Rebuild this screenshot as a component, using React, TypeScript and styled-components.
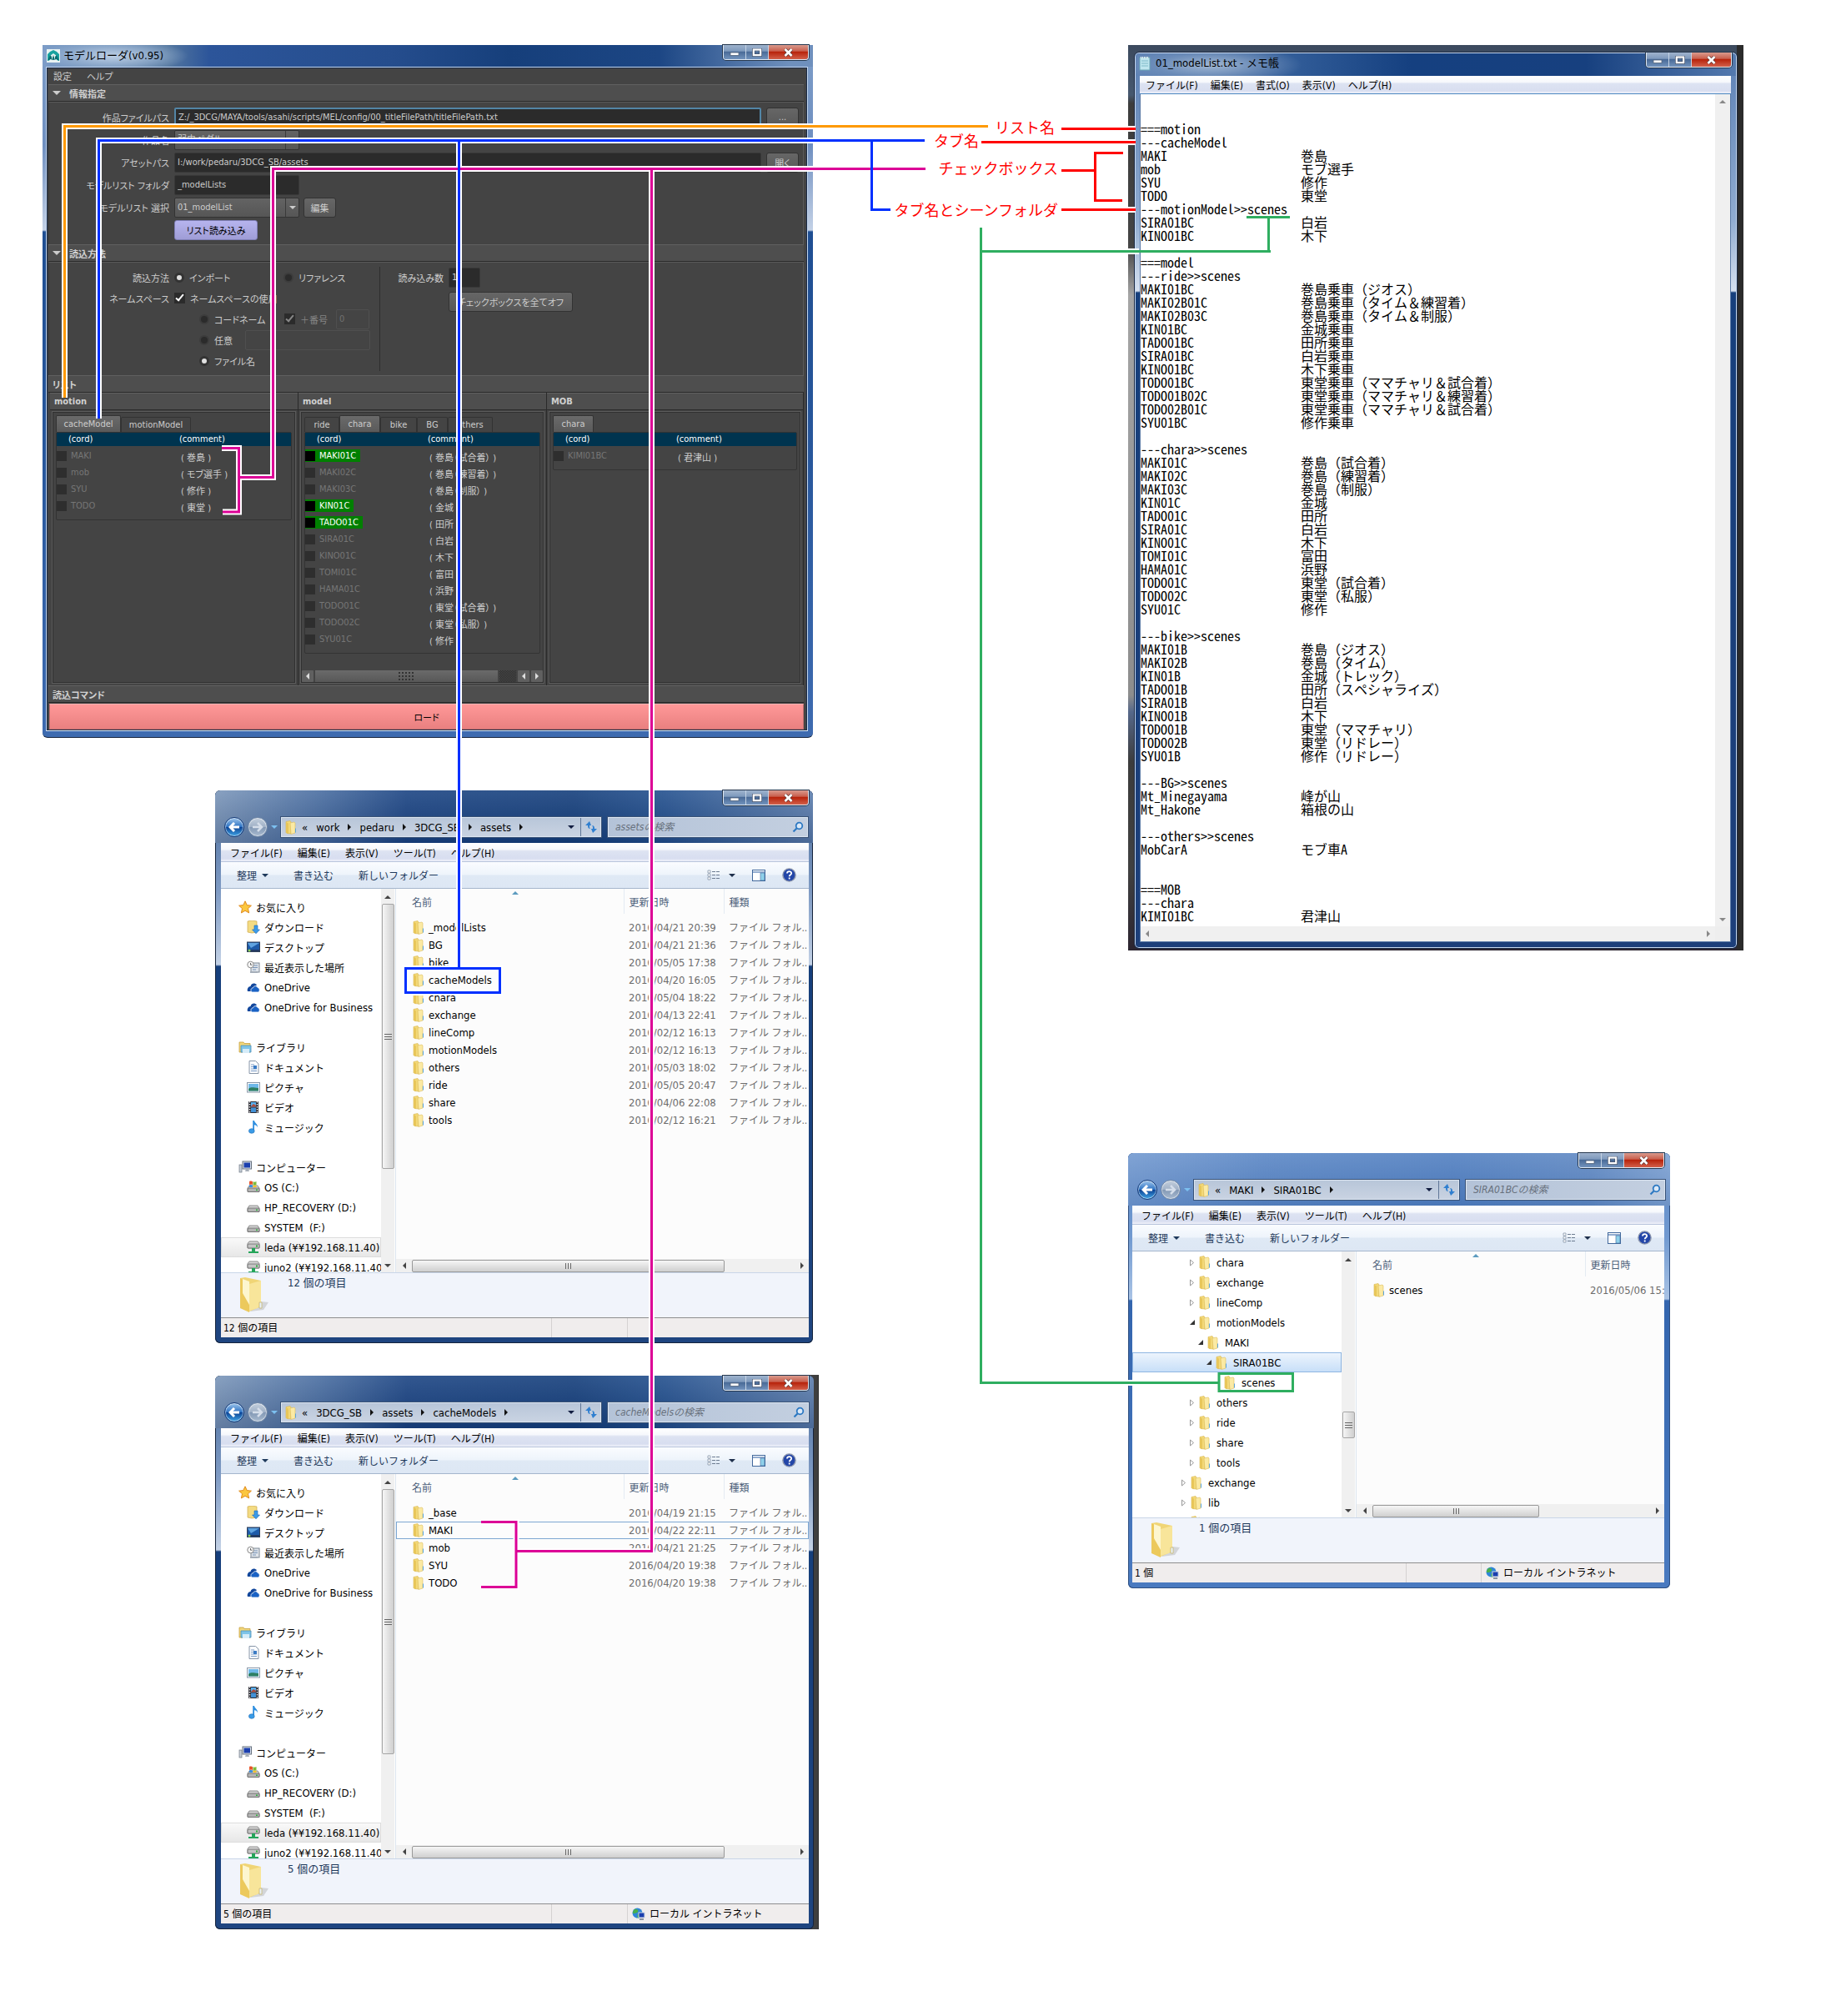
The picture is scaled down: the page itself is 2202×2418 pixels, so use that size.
import React from "react";
import styled, { createGlobalStyle, css } from "styled-components";

const UI = `"DejaVu Sans Condensed", "Noto Sans", "Noto Sans CJK JP", sans-serif`;
const MONO = `"Noto Sans Mono CJK JP", "Noto Sans CJK JP", monospace`;

const GlobalStyle = createGlobalStyle`
  *, *::before, *::after { box-sizing: border-box; }
  body { margin: 0; background: #fff; font-family: ${UI}; font-size: 12px; color: #000; }
  button, input, select, textarea { font: inherit; color: inherit; margin: 0; }
  button { padding: 0; border: 0; background: none; white-space: nowrap; }
`;

const Desktop = styled.main`
  position: relative;
  min-height: 100vh;
`;

type Box = { $x: number; $y: number; $w: number; $h: number };
const place = css<Box>`
  position: absolute;
  left: ${(p) => p.$x}px;
  top: ${(p) => p.$y}px;
  width: ${(p) => p.$w}px;
  height: ${(p) => p.$h}px;
`;

/* ---------- window chrome ---------- */

const Controls = styled.div`
  position: absolute;
  top: 0;
  right: ${(p: { $right?: number }) => p.$right ?? 4}px;
  display: flex;
  height: 18px;
  border: 1px solid #dfe8f3;
  border-top: 0;
  border-radius: 0 0 4px 4px;
  overflow: hidden;
  box-shadow: 0 0 0 1px #26384f;
`;

const ControlButton = styled.button<{ $close?: boolean }>`
  display: grid;
  place-items: center;
  width: ${(p) => (p.$close ? 47 : 27)}px;
  border-right: ${(p) => (p.$close ? "0" : "1px solid #c5d3e4")};
  background: ${(p) =>
    p.$close
      ? "linear-gradient(#d99a8d 0%, #c9604e 42%, #b8240c 50%, #d2604a 100%)"
      : "linear-gradient(#9fb3cd 0%, #7f9abd 42%, #4a6b98 50%, #7293bd 100%)"};
`;

function WindowControls({ right }: { right?: number }) {
  return (
    <Controls $right={right}>
      <ControlButton aria-label="最小化">
        <svg width="12" height="10"><rect x="1" y="5" width="10" height="3.5" fill="#fff" stroke="#53637a" strokeWidth=".8" /></svg>
      </ControlButton>
      <ControlButton aria-label="最大化">
        <svg width="12" height="10"><rect x="1.8" y="1.5" width="8.4" height="6.6" fill="none" stroke="#445068" strokeWidth="3.6" /><rect x="1.8" y="1.5" width="8.4" height="6.6" fill="none" stroke="#fff" strokeWidth="2.2" /></svg>
      </ControlButton>
      <ControlButton $close aria-label="閉じる">
        <svg width="13" height="10"><path d="M2.500 1l8 8M10.500 1l-8 8" stroke="#5b3a3a" strokeWidth="4" /><path d="M2.500 1l8 8M10.500 1l-8 8" stroke="#fff" strokeWidth="2.600" /></svg>
      </ControlButton>
    </Controls>
  );
}

const Triangle = styled.span<{ $dir: "up" | "down" | "left" | "right"; $size?: number; $color?: string }>`
  flex: none;
  width: 0;
  height: 0;
  border: ${(p) => p.$size ?? 4}px solid transparent;
  ${(p) => {
    const c = p.$color ?? "#444";
    if (p.$dir === "up") return `border-bottom-color:${c};border-top:0;`;
    if (p.$dir === "down") return `border-top-color:${c};border-bottom:0;`;
    if (p.$dir === "left") return `border-right-color:${c};border-left:0;`;
    return `border-left-color:${c};border-right:0;`;
  }}
`;

/* ---------- model loader ---------- */

const LoaderWindow = styled.section`
  ${place}
  display: flex;
  flex-direction: column;
  padding: 0 6px 7px 4px;
  border-radius: 0 0 6px 6px;
  border-bottom: 1px solid #16243c;
  background: linear-gradient(#7d9dc8 0, #6f8fc0 120px, #c3d1e6 222px, #1f4e92 224px, #28579c 500px, #3e6bb0 100%);
`;

const LoaderTitle = styled.header`
  display: flex;
  align-items: center;
  gap: 4px;
  height: 26px;
  margin: 0 -6px 0 -4px;
  padding-left: 5px;
  background:
    radial-gradient(ellipse 90px 20px at 85px 13px, rgba(205, 220, 238, 0.85), rgba(160, 185, 215, 0.6) 60%, transparent 100%),
    linear-gradient(90deg, #7d9dc8 0, #54779f 150px, #2c559a 200px, #254d8d 420px, #163f7b 560px, #1c4684 80%, #6f90bd 97%);
`;
const TitleText = styled.h1`
  margin: 0;
  font-size: 13px;
  font-weight: 400;
  line-height: 16px;
`;

const LoaderBody = styled.div`
  flex: 1;
  display: flex;
  flex-direction: column;
  padding: 0 4px 1px 2px;
  border: 1px solid #c3d6ee;
  border-bottom-color: #e0ebf8;
  outline: 1px solid #1b2c49;
  outline-offset: -2px;
  background: #444;
  color: #ccc;
  font-size: 11px;
  font-feature-settings: "palt";
`;

const DarkMenu = styled.nav`
  display: flex;
  gap: 18px;
  height: 20px;
  padding-left: 6px;
`;

const SectionTitle = styled.h2`
  display: flex;
  align-items: center;
  gap: 10px;
  margin: 0;
  height: 21px;
  padding-left: 5px;
  border-top: 1px solid #606060;
  border-bottom: 1px solid #2a2a2a;
  background: #4e4e4e;
  font-size: 11px;
  font-weight: 700;
  color: #d0d0d0;
`;

const SectionBox = styled.div`
  padding: 4px 0 4px;
  border: 1px solid #5a5a5a;
  border-left-color: #333;
  border-bottom: 0;
`;
const MethodBox = styled(SectionBox)`
  display: flex;
  padding: 5px 0;
`;
const MethodLeft = styled.div`
  width: 397px;
  border-right: 1px solid #2e2e2e;
`;
const MethodRight = styled.div`
  flex: 1;
  padding-left: 20px;
`;

const FormRow = styled.div<{ $h?: number; $indent?: number }>`
  display: flex;
  align-items: center;
  height: ${(p) => p.$h ?? 27}px;
  padding: 0 5px 0 ${(p) => p.$indent ?? 0}px;
`;
const FormLabel = styled.label<{ $w?: number }>`
  width: ${(p) => p.$w ?? 144}px;
  margin-right: 6px;
  text-align: right;
  white-space: nowrap;
`;
const DarkInput = styled.input<{ $w?: number; $focus?: boolean; $ghost?: boolean }>`
  ${(p) => (p.$w ? `width:${p.$w}px;` : "flex:1; min-width:0; margin-right:6px;")}
  height: 24px;
  padding: 0 3px;
  border: ${(p) => (p.$focus ? "2px solid #5285a6" : p.$ghost ? "1px solid #4f4f4f" : "1px solid #383838")};
  border-radius: 2px;
  background: ${(p) => (p.$ghost ? "#444" : "#2b2b2b")};
  color: ${(p) => (p.$ghost ? "#707070" : "#ccc")};
`;
const SelectWrap = styled.span`
  position: relative;
  width: 150px;
  height: 24px;
`;
const DarkSelect = styled.select`
  width: 100%;
  height: 24px;
  padding: 0 3px;
  appearance: none;
  border: 1px solid #333;
  border-radius: 2px;
  background: linear-gradient(90deg, transparent 132px, #3a3a3a 132px, #3a3a3a 133px, transparent 133px), linear-gradient(#636363, #565656);
`;
const SelectArrow = styled(Triangle)`
  position: absolute;
  right: 4px;
  top: 10px;
`;
const DarkButton = styled.button<{ $w: number }>`
  width: ${(p) => p.$w}px;
  height: 24px;
  border: 1px solid #333;
  border-radius: 3px;
  background: linear-gradient(#666, #585858);
`;
const EditButton = styled(DarkButton)`
  margin-left: 5px;
`;
const ListButton = styled(DarkButton)`
  margin-left: 150px;
  border: 1px solid #7f7fb5;
  background: linear-gradient(#b6b4ee, #9f9dd6);
  color: #000;
`;
const Choice = styled.label<{ $w?: number; $off?: boolean }>`
  display: flex;
  align-items: center;
  gap: 6px;
  width: ${(p) => (p.$w ? `${p.$w}px` : "auto")};
  white-space: nowrap;
  color: ${(p) => (p.$off ? "#858585" : "#ccc")};
`;
const Radio = styled.input`
  appearance: none;
  width: 12px;
  height: 12px;
  border-radius: 50%;
  border: 2px solid #3c3c3c;
  background: #2b2b2b;
  &:checked {
    border: 3px solid #333;
    background: #e0e0e0;
  }
`;
const Tick = styled.input<{ $off?: boolean }>`
  appearance: none;
  width: 13px;
  height: 13px;
  background: #2b2b2b;
  position: relative;
  &:checked::after {
    content: "";
    position: absolute;
    left: 4px;
    top: 0;
    width: 5px;
    height: 10px;
    border: solid ${(p) => (p.$off ? "#888" : "#fff")};
    border-width: 0 2px 2px 0;
    rotate: 40deg;
  }
`;

const Panels = styled.div`
  flex: 1;
  display: grid;
  grid-template-columns: 298px 298px 1fr;
  padding-left: 2px;
`;
const Panel = styled.section`
  display: flex;
  flex-direction: column;
  min-width: 0;
  border-right: 1px solid #2a2a2a;
`;
const PanelBox = styled.div`
  flex: 1;
  display: flex;
  flex-direction: column;
  justify-content: space-between;
  margin: 1px 2px 2px;
  border: 1px solid #5c5c5c;
  outline: 1px solid #303030;
  outline-offset: -2px;
  overflow: hidden;
`;
const PanelInner = styled.div`
  padding: 4px 4px 0;
`;
const Tabs = styled.div`
  display: flex;
  align-items: flex-end;
  height: 20px;
`;
const Tab = styled.button<{ $active?: boolean; $w: number }>`
  width: ${(p) => p.$w}px;
  height: ${(p) => (p.$active ? 20 : 18)}px;
  border: 1px solid #333;
  border-bottom: 0;
  border-radius: 2px 2px 0 0;
  background: ${(p) => (p.$active ? "linear-gradient(#6a6a6a, #5a5a5a)" : "#444")};
`;
const CordTable = styled.table`
  width: 100%;
  table-layout: fixed;
  border-collapse: separate;
  border-spacing: 0;
  border: 1px solid #333;
  border-radius: 2px;
  padding-bottom: 5px;
  th {
    height: 16px;
    padding: 0 0 0 14px;
    background: #00344f;
    color: #fff;
    font-weight: 400;
    text-align: left;
    line-height: 14px;
  }
  th:first-child { width: 147px; }
  th + th { padding-left: 0; }
  tbody::before { content: ""; display: table-row; height: 3px; }
  td {
    height: 20px;
    padding: 0;
    line-height: 14px;
    white-space: nowrap;
  }
  td + td { padding: 3px 0 0 2px; }
`;
const CordLabel = styled.label<{ $on?: boolean }>`
  display: inline-flex;
  align-items: center;
  gap: 5px;
  height: 15px;
  padding-right: 5px;
  background: ${(p) => (p.$on ? "#008000" : "transparent")};
  color: ${(p) => (p.$on ? "#fff" : "#767676")};
`;
const CordBox = styled.input<{ $on?: boolean }>`
  appearance: none;
  width: 12px;
  height: 12px;
  background: ${(p) => (p.$on ? "#000" : "#2e2e2e")};
`;
const DarkScroll = styled.div`
  display: flex;
  gap: 2px;
  height: 16px;
  padding: 1px;
`;
const DarkArrow = styled.button`
  display: grid;
  place-items: center;
  width: 14px;
  border-radius: 1px;
  background: #606060;
`;
const DarkThumb = styled.div`
  display: grid;
  place-items: center;
  width: 219px;
  background: linear-gradient(#6a6a6a, #585858);
`;
const DarkTrack = styled.div`
  flex: 1;
  background: repeating-conic-gradient(#2e2e2e 0 25%, #484848 0 50%) 0 0 / 2px 2px;
`;
const LoadButton = styled.button`
  height: 31px;
  margin: 1px 0 0 1px;
  border: 1px solid #c07070;
  border-top-color: #ffb0b0;
  background: linear-gradient(#ff9898, #e98080);
  color: #000;
`;

type Cord = [string, string, boolean?];

function CordList({ name, rows }: { name: string; rows: Cord[] }) {
  return (
    <CordTable>
      <thead>
        <tr><th>(cord)</th><th>(comment)</th></tr>
      </thead>
      <tbody>
        {rows.map(([code, comment, on]) => (
          <tr key={code}>
            <td>
              <CordLabel $on={on} htmlFor={`${name}-${code}`}>
                <CordBox $on={on} type="checkbox" id={`${name}-${code}`} defaultChecked={on} />
                {code}
              </CordLabel>
            </td>
            <td>( {comment} )</td>
          </tr>
        ))}
      </tbody>
    </CordTable>
  );
}

const motionRows: Cord[] = [["MAKI", "巻島"], ["mob", "モブ選手"], ["SYU", "修作"], ["TODO", "東堂"]];
const modelRows: Cord[] = [
  ["MAKI01C", "巻島（試合着）", true],
  ["MAKI02C", "巻島（練習着）"],
  ["MAKI03C", "巻島（制服）"],
  ["KIN01C", "金城", true],
  ["TADO01C", "田所", true],
  ["SIRA01C", "白岩"],
  ["KINO01C", "木下"],
  ["TOMI01C", "富田"],
  ["HAMA01C", "浜野"],
  ["TODO01C", "東堂（試合着）"],
  ["TODO02C", "東堂（私服）"],
  ["SYU01C", "修作"],
];

function ModelLoader() {
  return (
    <LoaderWindow $x={51} $y={54} $w={924} $h={831}>
      <LoaderTitle>
        <svg width="16" height="16" viewBox="0 0 16 16">
          <rect width="16" height="16" fill="#e9f3f3" />
          <path d="M1 14V6l3-3 4-2 4 2 3 3v8l-3-1V8L8 5 4 8v5z" fill="#17a2a0" />
          <path d="M1 14l3-7 2 2v4l2-6 2 6V9l2-2 3 7-3-2-4 1-4-1z" fill="#0b6e72" />
        </svg>
        <TitleText>モデルローダ(v0.95)</TitleText>
      </LoaderTitle>
      <WindowControls right={5} />
      <LoaderBody>
        <DarkMenu><button>設定</button><button>ヘルプ</button></DarkMenu>
        <SectionTitle><Triangle $dir="down" $size={5} $color="#ccc" />情報指定</SectionTitle>
        <SectionBox>
          <FormRow>
            <FormLabel htmlFor="title-path">作品ファイルパス</FormLabel>
            <DarkInput id="title-path" $focus defaultValue="Z:/_3DCG/MAYA/tools/asahi/scripts/MEL/config/00_titleFilePath/titleFilePath.txt" />
            <DarkButton $w={39}>...</DarkButton>
          </FormRow>
          <FormRow>
            <FormLabel htmlFor="title-name">作品名</FormLabel>
            <SelectWrap>
              <DarkSelect id="title-name"><option>弱虫ペダル</option></DarkSelect>
              <SelectArrow $dir="down" $color="#ccc" />
            </SelectWrap>
          </FormRow>
          <FormRow>
            <FormLabel htmlFor="asset-path">アセットパス</FormLabel>
            <DarkInput id="asset-path" defaultValue="I:/work/pedaru/3DCG_SB/assets" />
            <DarkButton $w={39}>開く</DarkButton>
          </FormRow>
          <FormRow>
            <FormLabel htmlFor="list-folder">モデルリスト フォルダ</FormLabel>
            <DarkInput id="list-folder" $w={150} defaultValue="_modelLists" />
          </FormRow>
          <FormRow>
            <FormLabel htmlFor="list-select">モデルリスト 選択</FormLabel>
            <SelectWrap>
              <DarkSelect id="list-select"><option>01_modelList</option></DarkSelect>
              <SelectArrow $dir="down" $color="#ccc" />
            </SelectWrap>
            <EditButton $w={39}>編集</EditButton>
          </FormRow>
          <FormRow><ListButton $w={100}>リスト読み込み</ListButton></FormRow>
        </SectionBox>
        <SectionTitle><Triangle $dir="down" $size={5} $color="#ccc" />読込方法</SectionTitle>
        <MethodBox>
          <MethodLeft>
            <FormRow $h={25}>
              <FormLabel as="span">読込方法</FormLabel>
              <Choice $w={131}><Radio type="radio" name="method" defaultChecked />インポート</Choice>
              <Choice><Radio type="radio" name="method" />リファレンス</Choice>
            </FormRow>
            <FormRow $h={25}>
              <FormLabel as="span">ネームスペース</FormLabel>
              <Choice><Tick type="checkbox" defaultChecked />ネームスペースの使用</Choice>
            </FormRow>
            <FormRow $h={25} $indent={180}>
              <Choice $w={102}><Radio type="radio" name="space" />コードネーム</Choice>
              <Choice $off $w={62}><Tick $off type="checkbox" defaultChecked disabled />＋番号</Choice>
              <DarkInput $ghost $w={40} aria-label="番号" defaultValue="0" disabled />
            </FormRow>
            <FormRow $h={25} $indent={180}>
              <Choice $w={55}><Radio type="radio" name="space" />任意</Choice>
              <DarkInput $ghost $w={150} aria-label="任意" disabled />
            </FormRow>
            <FormRow $h={25} $indent={180}>
              <Choice><Radio type="radio" name="space" defaultChecked />ファイル名</Choice>
            </FormRow>
          </MethodLeft>
          <MethodRight>
            <FormRow $h={25}>
              <FormLabel $w={56} htmlFor="count">読み込み数</FormLabel>
              <DarkInput id="count" $w={38} defaultValue="1" />
            </FormRow>
            <FormRow $h={33} $indent={62}><DarkButton $w={149}>チェックボックスを全てオフ</DarkButton></FormRow>
          </MethodRight>
        </MethodBox>
        <SectionTitle>リスト</SectionTitle>
        <Panels>
          <Panel>
            <SectionTitle>motion</SectionTitle>
            <PanelBox>
              <PanelInner>
                <Tabs><Tab $active $w={78}>cacheModel</Tab><Tab $w={84}>motionModel</Tab></Tabs>
                <CordList name="motion" rows={motionRows} />
              </PanelInner>
            </PanelBox>
          </Panel>
          <Panel>
            <SectionTitle>model</SectionTitle>
            <PanelBox>
              <PanelInner>
                <Tabs>
                  <Tab $w={42}>ride</Tab><Tab $active $w={49}>chara</Tab><Tab $w={44}>bike</Tab>
                  <Tab $w={37}>BG</Tab><Tab $w={54}>others</Tab>
                </Tabs>
                <CordList name="model" rows={modelRows} />
              </PanelInner>
              <DarkScroll>
                <DarkArrow aria-label="左"><Triangle $dir="left" $color="#ddd" /></DarkArrow>
                <DarkThumb>
                  <svg width="20" height="12">
                    {[0, 1, 2, 3, 4].map((c) => [0, 1, 2].map((r) => <rect key={`${c}${r}`} x={c * 4} y={r * 4 + 1} width="2" height="2" fill="#333" />))}
                  </svg>
                </DarkThumb>
                <DarkTrack />
                <DarkArrow aria-label="左へ"><Triangle $dir="left" $color="#ddd" /></DarkArrow>
                <DarkArrow aria-label="右へ"><Triangle $dir="right" $color="#ddd" /></DarkArrow>
              </DarkScroll>
            </PanelBox>
          </Panel>
          <Panel>
            <SectionTitle>MOB</SectionTitle>
            <PanelBox>
              <PanelInner>
                <Tabs><Tab $active $w={49}>chara</Tab></Tabs>
                <CordList name="mob" rows={[["KIMI01BC", "君津山"]]} />
              </PanelInner>
            </PanelBox>
          </Panel>
        </Panels>
        <SectionTitle>読込コマンド</SectionTitle>
        <LoadButton>ロード</LoadButton>
      </LoaderBody>
    </LoaderWindow>
  );
}

/* ---------- notepad ---------- */

const Backdrop = styled.div`
  ${place}
  background:
    linear-gradient(90deg, transparent 730px, #2b2b2b 730px),
    linear-gradient(#3c4a5e 0, #46586f 60px, #3d3d3d 70px, #444 240px, #a5a5a5 300px, #8d8d8d 780px, #56688a 800px, #3c3c3c 860px, #404040 990px, #2c2530 100%);
`;
const DarkStrip = styled.div`
  ${place}
  background: #3f3f3f;
  border-right: 1px solid #2c2c2c;
`;
const NotepadWindow = styled.section`
  ${place}
  display: flex;
  flex-direction: column;
  padding: 0 7px 7px 6px;
  border: 1px solid #1c2a44;
  border-radius: 6px;
  background: linear-gradient(#5c80b4 0, #8fabd0 200px, #d5e0ef 286px, #163f7c 288px, #1d3f7a 100%);
  box-shadow: inset 0 0 0 1px #c5d7ee;
`;
const NotepadTitle = styled.header`
  display: flex;
  align-items: center;
  gap: 6px;
  height: 27px;
  margin: 1px -6px 0 -5px;
  padding: 0 0 3px 4px;
  border-radius: 6px 6px 0 0;
  background:
    radial-gradient(ellipse 110px 24px at 90px 14px, rgba(170, 190, 215, 0.9), rgba(120, 150, 190, 0.6) 60%, transparent 100%),
    linear-gradient(90deg, #5f83b6, #2f5a96 200px, #154080 330px, #17407f 75%, #5379ae 100%);
`;
const MenuBar = styled.nav`
  display: flex;
  align-items: center;
  gap: ${(p: { $gap?: number }) => p.$gap ?? 18}px;
  height: 23px;
  padding-left: 11px;
  background: linear-gradient(#fff 0, #f6f8fc 35%, #dde3f2 45%, #d8def0 85%, #f0f2fa 100%);
  border-bottom: 1px solid #b8c4dc;
`;
const NotepadMenu = styled(MenuBar)`
  height: 22px;
  padding-left: 7px;
  border-bottom-color: #4a86c0;
`;
const NotepadBody = styled.div`
  flex: 1;
  display: grid;
  grid-template-columns: 1fr 18px;
  grid-template-rows: 1fr 18px;
  min-height: 0;
  border: 1px solid #5b7aa6;
  border-top: 0;
  background: #fff;
`;
const Editor = styled.textarea`
  display: block;
  width: 100%;
  height: 100%;
  padding: 1px 0 0;
  border: 0;
  outline: 0;
  resize: none;
  overflow: hidden;
  background: #fff;
  color: #000;
  font-family: ${MONO};
  font-size: 16px;
  line-height: 16px;
  tab-size: 8;
  white-space: pre;
`;
const ScrollV = styled.div`
  display: flex;
  flex-direction: column;
  align-items: center;
  justify-content: space-between;
  padding: 7px 0 6px;
  background: #f0f0f0;
`;
const ScrollH = styled.div`
  display: flex;
  align-items: center;
  justify-content: space-between;
  padding: 0 6px;
  background: #f0f0f0;
`;
const Corner = styled.div`
  background: #eee;
`;

const notepadText = [
  "", "",
  "===motion", "---cacheModel",
  "MAKI\t\t\t巻島", "mob\t\t\tモブ選手", "SYU\t\t\t修作", "TODO\t\t\t東堂",
  "---motionModel>>scenes",
  "SIRA01BC\t\t白岩", "KINO01BC\t\t木下",
  "",
  "===model", "---ride>>scenes",
  "MAKI01BC\t\t巻島乗車（ジオス）",
  "MAKI02B01C\t\t巻島乗車（タイム＆練習着）",
  "MAKI02B03C\t\t巻島乗車（タイム＆制服）",
  "KIN01BC\t\t\t金城乗車",
  "TADO01BC\t\t田所乗車",
  "SIRA01BC\t\t白岩乗車",
  "KINO01BC\t\t木下乗車",
  "TODO01BC\t\t東堂乗車（ママチャリ＆試合着）",
  "TODO01B02C\t\t東堂乗車（ママチャリ＆練習着）",
  "TODO02B01C\t\t東堂乗車（ママチャリ＆試合着）",
  "SYU01BC\t\t\t修作乗車",
  "",
  "---chara>>scenes",
  "MAKI01C\t\t\t巻島（試合着）",
  "MAKI02C\t\t\t巻島（練習着）",
  "MAKI03C\t\t\t巻島（制服）",
  "KIN01C\t\t\t金城",
  "TADO01C\t\t\t田所",
  "SIRA01C\t\t\t白岩",
  "KINO01C\t\t\t木下",
  "TOMI01C\t\t\t富田",
  "HAMA01C\t\t\t浜野",
  "TODO01C\t\t\t東堂（試合着）",
  "TODO02C\t\t\t東堂（私服）",
  "SYU01C\t\t\t修作",
  "",
  "---bike>>scenes",
  "MAKI01B\t\t\t巻島（ジオス）",
  "MAKI02B\t\t\t巻島（タイム）",
  "KIN01B\t\t\t金城（トレック）",
  "TADO01B\t\t\t田所（スペシャライズ）",
  "SIRA01B\t\t\t白岩",
  "KINO01B\t\t\t木下",
  "TODO01B\t\t\t東堂（ママチャリ）",
  "TODO02B\t\t\t東堂（リドレー）",
  "SYU01B\t\t\t修作（リドレー）",
  "",
  "---BG>>scenes",
  "Mt_Minegayama\t\t峰が山",
  "Mt_Hakone\t\t箱根の山",
  "",
  "---others>>scenes",
  "MobCarA\t\t\tモブ車A",
  "", "",
  "===MOB", "---chara",
  "KIMI01BC\t\t君津山",
].join("\n");

function Notepad() {
  return (
    <>
      <Backdrop $x={1353} $y={54} $w={738} $h={1086} />
      <NotepadWindow $x={1360} $y={62} $w={724} $h={1076}>
        <NotepadTitle>
          <svg width="14" height="18" viewBox="0 0 14 18">
            <rect x="1" y="2" width="12" height="15" fill="#bfe6ef" stroke="#6aa5b5" />
            <path d="M3 6h8M3 9h8M3 12h8" stroke="#7fb9c8" />
            <path d="M2 2h10" stroke="#fff" strokeWidth="2" strokeDasharray="1 1" />
          </svg>
          <TitleText>01_modelList.txt - メモ帳</TitleText>
        </NotepadTitle>
        <WindowControls right={6} />
        <NotepadMenu $gap={15}>
          {["ファイル(F)", "編集(E)", "書式(O)", "表示(V)", "ヘルプ(H)"].map((t) => <button key={t}>{t}</button>)}
        </NotepadMenu>
        <NotepadBody>
          <Editor aria-label="01_modelList.txt" defaultValue={notepadText} spellCheck={false} />
          <ScrollV><Triangle $dir="up" $color="#888" /><Triangle $dir="down" $color="#888" /></ScrollV>
          <ScrollH><Triangle $dir="left" $color="#888" /><Triangle $dir="right" $color="#888" /></ScrollH>
          <Corner />
        </NotepadBody>
      </NotepadWindow>
    </>
  );
}

/* ---------- icons ---------- */

function Folder({ size = 14 }: { size?: number }) {
  return (
    <svg width={size} height={Math.round(size * 1.2)} viewBox="0 0 14 17">
      <path d="M1 1.500l5-1 1 1.500V16l-5-.5-1-1z" fill="#f3d978" stroke="#d9b64e" strokeWidth=".6" />
      <path d="M6 3l5-1 1 1v12l-5 1.500z" fill="#fbeaa4" stroke="#dcbc5c" strokeWidth=".6" />
      <path d="M1 2l3 1.500V16l-3-1.500z" fill="#e8c65a" />
      <path d="M12 9.500h1v5h-1z" fill="#5ba4dd" />
    </svg>
  );
}

function BigFolder() {
  return (
    <svg width="38" height="44" viewBox="0 0 38 44">
      <path d="M27 30l9 1-6 9-16 2z" fill="#9a9a9a" opacity=".35" />
      <path d="M2 2l6-1 19 4v31l-5 2-9 4z" fill="#f0d576" />
      <path d="M13 9l14-4v28l-4 5-10 3z" fill="#f8e59a" />
      <path d="M2 2l11 6v35L2 38z" fill="#ecc95c" />
      <path d="M5 3l8 3v28L5 20z" fill="#fdf6cf" />
      <path d="M25 31h3v7h-3z" fill="#e8f2fa" stroke="#c9b672" strokeWidth=".8" />
    </svg>
  );
}

function TreeIcon({ kind }: { kind: string }) {
  const drive = (
    <>
      <path d="M1 9l2-3h10l2 3v4.500H1z" fill="#d5d5d5" stroke="#777" strokeWidth=".8" />
      <rect x="1" y="9" width="14" height="4.500" rx="1" fill="#b4b4b4" stroke="#666" strokeWidth=".8" />
      <rect x="11" y="10.500" width="2" height="1.500" fill="#2fae3c" />
    </>
  );
  const shapes: Record<string, React.ReactNode> = {
    star: <path d="M8 .8l2.200 4.800 5.200.6-3.900 3.500 1.100 5.200L8 12.300l-4.600 2.600 1.100-5.200L.6 6.200l5.200-.6z" fill="#fbc740" stroke="#e08a1c" strokeWidth="1" />,
    download: <><path d="M1 1l5-1 6 1v13l-6 1-5-1z" fill="#f3db83" stroke="#cfa94a" strokeWidth=".7" /><path d="M9 6h4v5h2.500L11 15.800 6.500 11H9z" fill="#3c9be8" stroke="#1565b8" strokeWidth=".6" /></>,
    desktop: <><rect x=".5" y="2" width="15" height="11.500" fill="#1d5aa8" stroke="#31415a" /><path d="M1 3h14L5 9z" fill="#5fa3e0" /><rect x="1" y="11" width="14" height="2" fill="#223a66" /><circle cx="3" cy="12" r="1.500" fill="#8bd15a" /></>,
    recent: <><rect x="5" y="3" width="10" height="11" fill="#dfe4ea" stroke="#7c8794" /><path d="M7 6h6M7 8.500h6M7 11h4" stroke="#7693b8" /><circle cx="4.500" cy="5" r="3.800" fill="#f6f6f6" stroke="#8b8b8b" /><path d="M4.500 3v2.200h2" stroke="#444" fill="none" strokeWidth=".8" /><rect x="4" y="13" width="9" height="2" fill="#a4adb8" /></>,
    onedrive: <><path d="M1 13C0 10 2 7 4.500 7 5 3.500 9 2 12 5L6 13z" fill="#12479c" /><path d="M6 14c-2-2-1-5 1.500-5.200C8.500 6 12 6 13 8.500c2.500.5 3 4 1 5.500z" fill="#1a62c4" stroke="#fff" strokeWidth=".8" /></>,
    library: <><path d="M1 2h5l1 1.500h7V14H1z" fill="#f2d77b" stroke="#c59f3f" strokeWidth=".8" /><path d="M3 6h12v8H3z" fill="#7ec4e8" stroke="#4b8fb8" strokeWidth=".8" /><path d="M5 10h8v5H5z" fill="#d6ecf8" /></>,
    doc: <><path d="M3 .5h7.500L14 4v11.500H3z" fill="#fbfcfe" stroke="#8896a8" /><path d="M5 5h4M5 7.500h7M5 10h7M5 12.500h7" stroke="#7b9cc6" /><rect x="8" y="6" width="4" height="4" fill="#3b7bc4" /></>,
    pic: <><rect x=".5" y="2.500" width="15" height="11.500" fill="#fff" stroke="#8896a8" /><rect x="2" y="4" width="12" height="8.500" fill="#6fb8e8" /><path d="M2 12.500V10c4-3 6-1 12-1v3.500z" fill="#2e7f63" /></>,
    video: <><rect x="2" y="1" width="12" height="14" fill="#2b2b33" /><path d="M3.500 1v14M12.500 1v14" stroke="#fff" strokeWidth="1.400" strokeDasharray="1.500 1.500" /><rect x="5" y="2" width="6" height="5.500" fill="#5ab0ee" /><rect x="5" y="8.500" width="6" height="5.500" fill="#4291d6" /><path d="M5 7l3-3 3 2v1.500H5z" fill="#b04a3a" /></>,
    music: <><path d="M7.200 0h1.800c.3 3 4.500 4 4 8.500-.3-2-2-3-4-3.200V12H7.200z" fill="#2f8fe0" /><ellipse cx="5.800" cy="12.500" rx="3.400" ry="2.800" fill="#3a9be6" stroke="#1f6bb6" strokeWidth=".6" /></>,
    computer: <><rect x="5" y="1" width="10.500" height="9" fill="#dfe4ea" stroke="#66717f" /><rect x="6.500" y="2.500" width="7.500" height="6" fill="#1b3fae" /><path d="M8 13h5l-1-3H9z" fill="#a6aeb8" /><rect x="1" y="5" width="3" height="9" fill="#c9d0d8" stroke="#6b7683" strokeWidth=".7" /></>,
    os: <>{drive}<path d="M3 1c2-1 3 0 4 .3V5C6 4.500 5 4 3 5z" fill="#e8552a" /><path d="M7.500 1.300c1.500.5 2.500.5 4-.3v4c-1.500.7-2.500.7-4 .2z" fill="#7dbb3c" /><path d="M3 5.500c2-1 3-.3 4 0V8H3z" fill="#3c8ee0" /><path d="M7.500 5.700c1.500.5 2.500.3 4-.2V8h-4z" fill="#f5c32c" /></>,
    drive,
    net: <><path d="M1 3.500L3 1h10l2 2.500V9H1z" fill="#d8d8d8" stroke="#777" strokeWidth=".8" /><rect x="1" y="4" width="14" height="5" rx="1" fill="#c4c4c4" stroke="#666" strokeWidth=".8" /><rect x="11" y="5.500" width="2" height="2" fill="#2fae3c" /><path d="M8 9v5" stroke="#25a55a" strokeWidth="4" /><path d="M2 14h12" stroke="#25a55a" strokeWidth="2" /></>,
  };
  return <svg width="16" height="16" viewBox="0 0 16 16">{shapes[kind]}</svg>;
}

/* ---------- explorer ---------- */

const ExplorerFrame = styled.section<Box & { $l: number; $r: number; $light?: boolean }>`
  ${place}
  display: flex;
  flex-direction: column;
  padding: 0 ${(p) => p.$r}px 7px ${(p) => p.$l}px;
  border-radius: 6px;
  background: ${(p) =>
    p.$light
      ? "linear-gradient(#5d88c6 0, #7099d0 100px, #a9c3e5 175px, #3365ae 177px, #4a7ac0 100%)"
      : "linear-gradient(#4a6c9c 0, #7f9bc4 120px, #c4d2e6 209px, #163f7c 211px, #1f4580 100%)"};
  box-shadow: inset 0 0 0 1px ${(p) => (p.$light ? "#2f4f80" : "#16243c")};
`;
const ExplorerTop = styled.header<{ $l: number; $r: number; $light?: boolean }>`
  display: flex;
  align-items: flex-end;
  gap: 8px;
  height: 63px;
  margin: 0 -${(p) => p.$r}px 0 -${(p) => p.$l}px;
  padding: 0 6px 7px 11px;
  border-radius: 6px 6px 0 0;
  background: ${(p) =>
    p.$light
      ? "linear-gradient(rgba(255,255,255,.12), rgba(20,50,100,.1)), linear-gradient(90deg, #6f97cf 0, #5784c4 25%, #4e7dc0 60%, #5c86c2 85%, #7ba0d2 100%)"
      : "linear-gradient(rgba(255,255,255,.1), rgba(0,20,60,.2)), linear-gradient(90deg, #7c97ba 0, #4b6fa2 17%, #1b4483 32%, #153f7c 60%, #23508e 75%, #5e7fae 100%)"};
`;
const NavButtons = styled.div`
  display: flex;
  align-items: center;
  gap: 4px;
  height: 24px;
`;
const Orb = styled.button<{ $back?: boolean }>`
  display: grid;
  place-items: center;
  width: 24px;
  height: 24px;
  border: 1px solid ${(p) => (p.$back ? "#143a78" : "#6f87a6")};
  border-radius: 50%;
  background: ${(p) =>
    p.$back
      ? "linear-gradient(#9fc6ec 0, #2f74c4 48%, #0d4596 52%, #3fa4e6 100%)"
      : "linear-gradient(#c3cfdd 0, #9fb0c6 50%, #8399b5 52%, #a9bbd0 100%)"};
  box-shadow: inset 0 0 0 1px rgba(255, 255, 255, 0.5);
`;
const AddressBar = styled.div<{ $w: number }>`
  display: flex;
  align-items: center;
  width: ${(p) => p.$w}px;
  height: 24px;
  padding-left: 4px;
  margin-left: -4px;
  border: 1px solid #dbe5f1;
  outline: 1px solid #3a5377;
  background: linear-gradient(#b8c6d9, #c9d3e2);
  font-size: 13px;
`;
const Crumbs = styled.div`
  flex: 1;
  display: flex;
  align-items: center;
  gap: 10px;
  padding-left: 6px;
`;
const RefreshButton = styled.button`
  display: grid;
  place-items: center;
  width: 24px;
  height: 22px;
  margin-left: 7px;
  border-left: 1px solid #5f7697;
`;
const SearchBox = styled.label`
  flex: 1;
  display: flex;
  align-items: center;
  height: 24px;
  padding: 0 4px 0 8px;
  border: 1px solid #dbe5f1;
  outline: 1px solid #3a5377;
  background: linear-gradient(90deg, #b4c3d8, #c3cfe0);
`;
const SearchInput = styled.input`
  flex: 1;
  min-width: 0;
  padding: 0;
  border: 0;
  outline: 0;
  background: none;
  font-size: 12px;
  &::placeholder { color: #67707c; font-style: italic; opacity: 1; }
`;
const ToolBar = styled.div`
  display: flex;
  align-items: center;
  gap: 30px;
  height: 32px;
  padding: 0 15px 0 19px;
  background: linear-gradient(#fafcff 0, #eef4fb 48%, #dfe9f5 52%, #dde7f4 100%);
  border-bottom: 1px solid #a5b6cd;
  color: #1e395b;
`;
const ToolButton = styled.button<{ $gap?: number }>`
  display: flex;
  align-items: center;
  gap: ${(p) => p.$gap ?? 6}px;
`;
const ToolIcons = styled.div`
  display: flex;
  align-items: center;
  gap: 20px;
  margin-left: auto;
`;
const Panes = styled.div`
  flex: 1;
  display: flex;
  min-height: 0;
  background: #fcfcfc;
`;
const Tree = styled.ul<{ $w: number; $top: number }>`
  width: ${(p) => p.$w}px;
  margin: 0;
  padding: ${(p) => p.$top}px 0 0;
  list-style: none;
  overflow: hidden;
  background: #fff;
`;
const TreeRow = styled.li<{ $pad: number; $mark?: "hover" | "selected"; $gap?: number; $latin?: boolean }>`
  display: flex;
  align-items: center;
  gap: ${(p) => p.$gap ?? 5}px;
  height: 24px;
  padding-left: ${(p) => p.$pad}px;
  font-size: ${(p) => (p.$latin ? 13 : 12)}px;
  white-space: pre;
  svg { flex: none; }
  ${(p) => p.$mark === "hover" && "background: linear-gradient(#fafafa, #e6e6e6); box-shadow: inset 0 0 0 1px #dcdcdc;"}
  ${(p) => p.$mark === "selected" && "background: linear-gradient(#eef5fd, #c6def8); box-shadow: inset 0 0 0 1px #8fb6e2;"}
`;
const Expander = styled.span`
  display: grid;
  place-items: center;
  width: 10px;
  margin-right: -4px;
`;
const SideScroll = styled.div`
  display: flex;
  flex-direction: column;
  align-items: center;
  width: 16px;
  padding: 8px 0 6px;
  background: #f0f0f0;
`;
const SideThumb = styled.div<{ $top: number; $h: number }>`
  display: grid;
  place-items: center;
  width: 15px;
  height: ${(p) => p.$h}px;
  margin: ${(p) => p.$top}px 0 auto;
  border: 1px solid #a5a5a5;
  border-radius: 2px;
  background: linear-gradient(90deg, #f6f6f6, #e2e2e2 50%, #cfcfcf);
`;
const ListPane = styled.div`
  flex: 1;
  display: flex;
  flex-direction: column;
  justify-content: space-between;
  min-width: 0;
  margin-left: 1px;
  border-left: 1px solid #dde6f0;
`;
const FileTable = styled.table`
  position: relative;
  width: 100%;
  table-layout: fixed;
  border-collapse: collapse;
  th {
    height: 30px;
    padding: 0 0 0 6px;
    border-left: 1px solid #e4ebf3;
    color: #4c607a;
    font-weight: 400;
    text-align: left;
    white-space: nowrap;
  }
  th:first-child { padding-left: 19px; border-left: 0; }
  td {
    height: 21px;
    padding: 0 0 0 6px;
    color: #6d6d6d;
    white-space: nowrap;
    line-height: 16px;
  }
  td:first-child { padding-left: 20px; color: #000; font-size: 13px; }
  td:nth-child(2) { font-size: 13px; }
  tbody::before { content: ""; display: table-row; height: 6px; }
`;
const SortMark = styled.span`
  position: absolute;
  left: ${(p: { $x: number }) => p.$x}px;
  top: 3px;
  display: flex;
`;
const FileRow = styled.tr<{ $focus?: boolean }>`
  ${(p) => p.$focus && "outline: 1px solid #7da7d2; outline-offset: -1px;"}
`;
const FileName = styled.span`
  display: flex;
  align-items: center;
  gap: 5px;
`;
const BottomScroll = styled.div`
  display: flex;
  align-items: center;
  height: 16px;
  padding: 0 6px 0 8px;
  background: #f0f0f0;
`;
const BottomThumb = styled.div<{ $w: number }>`
  display: grid;
  place-items: center;
  width: ${(p) => p.$w}px;
  height: 15px;
  margin: 0 auto 0 7px;
  border: 1px solid #999;
  border-radius: 2px;
  background: linear-gradient(#f6f6f6, #e2e2e2 50%, #cfcfcf);
`;
const Details = styled.div`
  display: flex;
  gap: 21px;
  height: 54px;
  padding: 4px 0 0 21px;
  border-top: 1px solid #c9d6e8;
  background: #f1f4fb;
  color: #1e395b;
  font-size: 13px;
  line-height: 16px;
`;
const StatusBar = styled.footer`
  display: flex;
  height: 24px;
  border-top: 1px solid #8e8e8e;
  background: #f0eded;
  line-height: 22px;
`;
const StatusCell = styled.span<{ $w?: number }>`
  display: flex;
  align-items: center;
  gap: 5px;
  ${(p) => (p.$w ? `width:${p.$w}px;` : "flex:1;")}
  padding-left: 3px;
  white-space: nowrap;
  & + & { border-left: 1px solid #d5d2d2; padding-left: 5px; }
`;

type Node = { label?: string; icon?: string; pad: number; tri?: "open" | "closed" | "none"; mark?: "hover" | "selected" };
type File = [string, string, string?];
type ExplorerProps = {
  box: [number, number, number, number];
  inset: [number, number];
  light?: boolean;
  address: string[];
  addressWidth: number;
  search: string;
  tree: Node[];
  treeWidth: number;
  treeTop: number;
  thumb: [number, number];
  columns: number[];
  headers: string[];
  sortX: number;
  files: File[];
  focus?: string;
  scrollThumb: number;
  count: string;
  status: string;
  statusWidths: [number, number];
  intranet?: boolean;
};

const isLatin = (text = "") => /^[\x20-\xff]+$/.test(text);

const Grip = ({ vertical }: { vertical?: boolean }) => (
  <svg width="9" height="9">
    <path d={vertical ? "M0 1.500h9M0 4.500h9M0 7.500h9" : "M1.500 1v7M4.500 1v7M7.500 1v7"} stroke="#666" />
  </svg>
);

function Explorer(p: ExplorerProps) {
  const [x, y, w, h] = p.box;
  const [l, r] = p.inset;
  return (
    <ExplorerFrame $x={x} $y={y} $w={w} $h={h} $l={l} $r={r} $light={p.light}>
      <ExplorerTop $l={l} $r={r} $light={p.light}>
        <NavButtons>
          <Orb $back aria-label="戻る">
            <svg width="14" height="12"><path d="M7 1L2 6l5 5M2.500 6H13" fill="none" stroke="#fff" strokeWidth="3" /></svg>
          </Orb>
          <Orb aria-label="進む">
            <svg width="14" height="12"><path d="M7 1l5 5-5 5M11.500 6H1" fill="none" stroke="#d5deea" strokeWidth="2.500" /></svg>
          </Orb>
          <Triangle $dir="down" $size={4} $color="#7cc0f0" />
        </NavButtons>
        <AddressBar $w={p.addressWidth}>
          <Folder />
          <Crumbs>
            <span>«</span>
            {p.address.map((a) => (
              <React.Fragment key={a}>
                <button>{a}</button>
                <Triangle $dir="right" $size={4} $color="#111" />
              </React.Fragment>
            ))}
          </Crumbs>
          <Triangle $dir="down" $size={4} $color="#111c40" />
          <RefreshButton aria-label="更新">
            <svg width="16" height="14" viewBox="0 0 16 14">
              <path d="M6 0L1 5h3c0 3 1 4 3 4-1-1-1-2-1-4h2z" fill="#2f7fd0" />
              <path d="M10 14l5-5h-3c0-3-1-4-3-4 1 1 1 2 1 4H8z" fill="#2f7fd0" />
            </svg>
          </RefreshButton>
        </AddressBar>
        <SearchBox>
          <SearchInput placeholder={p.search} aria-label={p.search} />
          <svg width="14" height="14"><circle cx="8.500" cy="5.500" r="3.800" fill="#dbe9f8" stroke="#2c78c2" strokeWidth="1.800" /><path d="M5.500 8.500L1.500 12.500" stroke="#2c78c2" strokeWidth="2.200" /></svg>
        </SearchBox>
      </ExplorerTop>
      <WindowControls right={r} />
      <MenuBar>
        {["ファイル(F)", "編集(E)", "表示(V)", "ツール(T)", "ヘルプ(H)"].map((t) => <button key={t}>{t}</button>)}
      </MenuBar>
      <ToolBar>
        <ToolButton>整理<Triangle $dir="down" $size={4} $color="#1e395b" /></ToolButton>
        <ToolButton>書き込む</ToolButton>
        <ToolButton>新しいフォルダー</ToolButton>
        <ToolIcons>
          <ToolButton $gap={10} aria-label="表示方法">
            <svg width="16" height="13"><path d="M1 1h3v3H1zM1 5h3v3H1zM1 9h3v3H1z" fill="#fff" stroke="#8795a8" strokeWidth=".8" /><path d="M6 2.500h4M11 2.500h4M6 6.500h4M11 6.500h4M6 10.500h4M11 10.500h4" stroke="#6d7c91" /></svg>
            <Triangle $dir="down" $size={4} $color="#1e2f4b" />
          </ToolButton>
          <ToolButton aria-label="プレビュー">
            <svg width="16" height="14"><rect x=".5" y=".5" width="15" height="13" fill="#fff" stroke="#41689c" /><path d="M1 3h14" stroke="#6f92c0" strokeWidth="1.500" /><rect x="10" y="4" width="5" height="9" fill="#8fd0ea" stroke="#41689c" strokeWidth=".6" /></svg>
          </ToolButton>
          <ToolButton aria-label="ヘルプ">
            <svg width="17" height="17"><circle cx="8.500" cy="8.500" r="7.600" fill="#2346a8" stroke="#8d97ad" strokeWidth="1.400" /><path d="M6 6.600c0-3.200 5.200-3.200 5.200-.2 0 1.800-2.500 1.900-2.500 3.800M8.700 11.500v2" fill="none" stroke="#fff" strokeWidth="1.800" /></svg>
          </ToolButton>
        </ToolIcons>
      </ToolBar>
      <Panes>
        <Tree $w={p.treeWidth} $top={p.treeTop}>
          {p.tree.map((n, i) => (
            <TreeRow key={i} $pad={n.pad} $mark={n.mark} $gap={n.tri ? 7 : 5} $latin={isLatin(n.label)}>
              {n.tri && (
                <Expander>
                  {n.tri === "closed" && <svg width="8" height="9"><path d="M1.500 1l4 3.500-4 3.500z" fill="#fff" stroke="#999" /></svg>}
                  {n.tri === "open" && <svg width="8" height="8"><path d="M7 1v6H1z" fill="#333" /></svg>}
                </Expander>
              )}
              {n.tri ? <Folder /> : n.icon && <TreeIcon kind={n.icon} />}
              {n.label}
            </TreeRow>
          ))}
        </Tree>
        <SideScroll>
          <Triangle $dir="up" />
          <SideThumb $top={p.thumb[0]} $h={p.thumb[1]}><Grip vertical /></SideThumb>
          <Triangle $dir="down" />
        </SideScroll>
        <ListPane>
          <FileTable>
            <colgroup>
              {p.columns.map((c, i) => <col key={i} width={c} />)}
              <col />
            </colgroup>
            <thead>
              <tr>
                {p.headers.map((t, i) => (
                  <th key={t}>{t}{i === 0 && <SortMark $x={p.sortX}><Triangle $dir="up" $color="#5c9bbf" /></SortMark>}</th>
                ))}
              </tr>
            </thead>
            <tbody>
              {p.files.map(([name, date, kind]) => (
                <FileRow key={name} $focus={name === p.focus}>
                  <td><FileName><Folder />{name}</FileName></td>
                  <td>{date}</td>
                  {kind && <td>{kind}</td>}
                </FileRow>
              ))}
            </tbody>
          </FileTable>
          <BottomScroll>
            <Triangle $dir="left" />
            <BottomThumb $w={p.scrollThumb}><Grip /></BottomThumb>
            <Triangle $dir="right" />
          </BottomScroll>
        </ListPane>
      </Panes>
      <Details><BigFolder />{p.count}</Details>
      <StatusBar>
        <StatusCell $w={p.statusWidths[0]}>{p.status}</StatusCell>
        <StatusCell $w={p.statusWidths[1]} />
        <StatusCell>
          {p.intranet && (
            <>
              <svg width="16" height="16"><circle cx="6.500" cy="6.500" r="6" fill="#2f86d8" /><path d="M3 2c3-1 5 1 4 3S3 7 1 7c0-2 .5-4 2-5zM7 8c2-1 4 0 4 2l-3 3C6 12 6 9 7 8z" fill="#49b04a" /><rect x="8" y="6" width="7" height="6" fill="#1b3fae" stroke="#cfd8e4" /><path d="M9 14h5" stroke="#8a95a5" strokeWidth="2" /></svg>
              ローカル イントラネット
            </>
          )}
        </StatusCell>
      </StatusBar>
    </ExplorerFrame>
  );
}

const favoritesTree: Node[] = [
  { label: "お気に入り", icon: "star", pad: 21 },
  { label: "ダウンロード", icon: "download", pad: 31 },
  { label: "デスクトップ", icon: "desktop", pad: 31 },
  { label: "最近表示した場所", icon: "recent", pad: 31 },
  { label: "OneDrive", icon: "onedrive", pad: 31 },
  { label: "OneDrive for Business", icon: "onedrive", pad: 31 },
  { pad: 31 },
  { label: "ライブラリ", icon: "library", pad: 21 },
  { label: "ドキュメント", icon: "doc", pad: 31 },
  { label: "ピクチャ", icon: "pic", pad: 31 },
  { label: "ビデオ", icon: "video", pad: 31 },
  { label: "ミュージック", icon: "music", pad: 31 },
  { pad: 31 },
  { label: "コンピューター", icon: "computer", pad: 21 },
  { label: "OS (C:)", icon: "os", pad: 31 },
  { label: "HP_RECOVERY (D:)", icon: "drive", pad: 31 },
  { label: "SYSTEM  (F:)", icon: "drive", pad: 31 },
  { label: "leda (¥¥192.168.11.40)", icon: "net", pad: 31, mark: "hover" },
  { label: "juno2 (¥¥192.168.11.40)", icon: "net", pad: 31 },
];

const folderTree: Node[] = [
  { label: "chara", pad: 67, tri: "closed" },
  { label: "exchange", pad: 67, tri: "closed" },
  { label: "lineComp", pad: 67, tri: "closed" },
  { label: "motionModels", pad: 67, tri: "open" },
  { label: "MAKI", pad: 77, tri: "open" },
  { label: "SIRA01BC", pad: 87, tri: "open", mark: "selected" },
  { label: "scenes", pad: 97, tri: "none" },
  { label: "others", pad: 67, tri: "closed" },
  { label: "ride", pad: 67, tri: "closed" },
  { label: "share", pad: 67, tri: "closed" },
  { label: "tools", pad: 67, tri: "closed" },
  { label: "exchange", pad: 57, tri: "closed" },
  { label: "lib", pad: 57, tri: "closed" },
  { label: "", pad: 57, tri: "none" },
];

const KIND = "ファイル フォル..";
const assetFiles: File[] = [
  ["_modelLists", "2016/04/21 20:39", KIND],
  ["BG", "2016/04/21 21:36", KIND],
  ["bike", "2016/05/05 17:38", KIND],
  ["cacheModels", "2016/04/20 16:05", KIND],
  ["chara", "2016/05/04 18:22", KIND],
  ["exchange", "2016/04/13 22:41", KIND],
  ["lineComp", "2016/02/12 16:13", KIND],
  ["motionModels", "2016/02/12 16:13", KIND],
  ["others", "2016/05/03 18:02", KIND],
  ["ride", "2016/05/05 20:47", KIND],
  ["share", "2016/04/06 22:08", KIND],
  ["tools", "2016/02/12 16:21", KIND],
];
const cacheFiles: File[] = [
  ["_base", "2016/04/19 21:15", KIND],
  ["MAKI", "2016/04/22 22:11", KIND],
  ["mob", "2016/04/21 21:25", KIND],
  ["SYU", "2016/04/20 19:38", KIND],
  ["TODO", "2016/04/20 19:38", KIND],
];

/* ---------- annotations ---------- */

const Overlay = styled.svg`
  position: absolute;
  left: 0;
  top: 0;
  pointer-events: none;
`;
const Note = styled.span<{ $right: number; $y: number }>`
  position: absolute;
  left: ${(p) => p.$right}px;
  top: ${(p) => p.$y}px;
  translate: -100% -50%;
  color: #f00;
  font-size: 18px;
  line-height: 24px;
  white-space: nowrap;
`;

const connectors: [string, string][] = [
  ["#ff9900", "M1185 151.500H77.500V477"],
  ["#dc0096", "M1110 202.500H327.500V572.500H286.500M266 537.500H286.500V614H267"],
  ["#dc0096", "M781.500 202.500V1860.500H619M577 1825.500H619V1903.500H577"],
  ["#0030ff", "M1109 168.500H118.500V502"],
  ["#0030ff", "M550.500 168.500V1161"],
  ["#0030ff", "M1045.500 168.500V251.500H1068"],
  ["#0030ff", "M486.500 1161.500H599.500V1190.500H486.500Z"],
  ["#ff0000", "M1273 154.500H1362M1177 170.500H1362M1273 251.500H1362"],
  ["#ff0000", "M1273 204.500H1313.500M1347 183.500H1313.500V240.500H1346"],
  ["#2fae60", "M1176.500 273V1658.500H1461M1176.500 301.500H1524M1521.500 301V261M1495 260.500H1547"],
  ["#2fae60", "M1462 1647.500H1550.500V1668.500H1462Z"],
];
/* White casings sit under lines that cross a window; the ones beside the notepad text stay bare. */
const cased = connectors.filter(([color]) => color !== "#2fae60");

function Annotations() {
  return (
    <>
      <Overlay width="2202" height="2330" viewBox="0 0 2202 2330" fill="none" aria-hidden="true">
        {cased.map(([, d], i) => <path key={i} d={d} stroke="#fff" strokeWidth="7" />)}
        <path d="M1340 301.500H1366M1340 1658.500H1461" stroke="#fff" strokeWidth="7" />
        {connectors.map(([c, d], i) => <path key={i} d={d} stroke={c} strokeWidth="3" />)}
      </Overlay>
      <Note $right={1265} $y={154}>リスト名</Note>
      <Note $right={1174} $y={170}>タブ名</Note>
      <Note $right={1269} $y={203}>チェックボックス</Note>
      <Note $right={1269} $y={253}>タブ名とシーンフォルダ</Note>
    </>
  );
}

export default function App() {
  const shared = {
    inset: [7, 5] as [number, number],
    addressWidth: 384,
    tree: favoritesTree,
    treeWidth: 192,
    treeTop: 10,
    thumb: [6, 318] as [number, number],
    columns: [273, 120],
    headers: ["名前", "更新日時", "種類"],
    sortX: 139,
    scrollThumb: 375,
    statusWidths: [396, 91] as [number, number],
  };
  return (
    <>
      <GlobalStyle />
      <Desktop>
        <ModelLoader />
        <Notepad />
        <Explorer {...shared} box={[258, 948, 717, 663]} address={["work", "pedaru", "3DCG_SB", "assets"]} search="assetsの検索" files={assetFiles} count="12 個の項目" status="12 個の項目" />
        <DarkStrip $x={964} $y={1649} $w={18} $h={665} />
        <Explorer {...shared} box={[258, 1650, 718, 664]} inset={[7, 6]} address={["3DCG_SB", "assets", "cacheModels"]} search="cacheModelsの検索" files={cacheFiles} focus="MAKI" count="5 個の項目" status="5 個の項目" intranet />
        <Explorer
          light
          box={[1353, 1383, 650, 522]}
          inset={[5, 7]}
          address={["MAKI", "SIRA01BC"]}
          addressWidth={318}
          search="SIRA01BCの検索"
          tree={folderTree}
          treeWidth={251}
          treeTop={1}
          thumb={[180, 32]}
          columns={[274]}
          headers={["名前", "更新日時"]}
          sortX={139}
          files={[["scenes", "2016/05/06 15:"]]}
          scrollThumb={200}
          count="1 個の項目"
          status="1 個"
          statusWidths={[328, 90]}
          intranet
        />
        <Annotations />
      </Desktop>
    </>
  );
}
